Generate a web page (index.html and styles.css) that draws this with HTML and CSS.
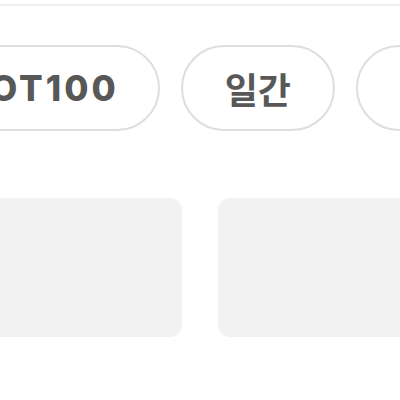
FILE: index.html
```html
<!DOCTYPE html>
<html lang="ko">
<head>
    <meta charset="UTF-8">
    <meta name="viewport" content="width=device-width, initial-scale=1.0">
    <title>차트</title>
    <link rel="stylesheet" href="styles.css">
</head>
<body>
    <div class="topbar"></div>

    <nav class="chips">
        <a class="chip"><span class="chip-label latin">HOT100</span></a>
        <a class="chip"><span class="chip-label">일간</span></a>
        <a class="chip"><span class="chip-label">주간</span></a>
    </nav>

    <section class="cards">
        <div class="card"></div>
        <div class="card"></div>
    </section>
</body>
</html>
```

FILE: styles.css
```css
html, body {
    overflow: hidden;
}
body {
    margin: 0;
    background-color: #fff;
    font-family: Inter, "Noto Sans CJK KR", sans-serif;
}
.topbar {
    height: 4px;
    border-bottom: 2px solid #efefef;
}
.chips {
    display: flex;
    gap: 21px;
    margin: 39px 0 0 -83px;
}
.chip {
    flex-shrink: 0;
    box-sizing: border-box;
    display: flex;
    align-items: center;
    height: 86px;
    padding: 0 42px;
    border: 2px solid #dedede;
    border-radius: 43px;
    color: #585858;
    text-decoration: none;
}
.chip-label {
    font-family: "Noto Sans CJK KR", sans-serif;
    font-size: 36px;
    font-weight: 700;
    line-height: 1;
}
.chip-label.latin {
    font-family: Inter, sans-serif;
    font-size: 35px;
    font-weight: 800;
    letter-spacing: 3px;
    margin-right: -3px;
}
.cards {
    display: flex;
    gap: 36px;
    margin: 67px 0 0 -38px;
}
.card {
    flex-shrink: 0;
    width: 220px;
    height: 139px;
    border-radius: 12px;
    background-color: #f2f2f2;
}
```
